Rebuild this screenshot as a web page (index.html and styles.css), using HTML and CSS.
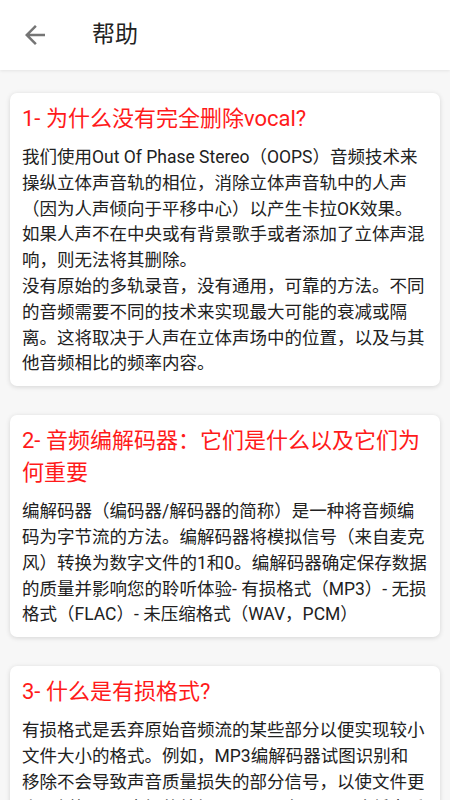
FILE: index.html
```html
<!DOCTYPE html>
<html lang="zh-CN">
<head>
<meta charset="utf-8">
<meta name="viewport" content="width=device-width, initial-scale=1">
<title>帮助</title>
<link rel="stylesheet" href="styles.css">
</head>
<body>
<header class="appbar">
  <span class="back" aria-label="返回">
    <svg viewBox="0 0 24 24" width="30" height="30"><path d="M20 11H7.83l5.59-5.59L12 4l-8 8 8 8 1.41-1.41L7.83 13H20v-2z" fill="#757575"/></svg>
  </span>
  <h1 class="title">帮助</h1>
</header>
<main class="list">
  <section class="card">
    <h2 class="q">1- 为什么没有完全删除vocal?</h2>
    <p class="a">我们使用Out Of Phase Stereo（OOPS）音频技术来操纵立体声音轨的相位，消除立体声音轨中的人声（因为人声倾向于平移中心）以产生卡拉OK效果。<br>如果人声不在中央或有背景歌手或者添加了立体声混响，则无法将其删除。<br>没有原始的多轨录音，没有通用，可靠的方法。不同的音频需要不同的技术来实现最大可能的衰减或隔离。这将取决于人声在立体声场中的位置，以及与其他音频相比的频率内容。</p>
  </section>
  <section class="card">
    <h2 class="q">2- 音频编解码器：它们是什么以及它们为何重要</h2>
    <p class="a">编解码器（编码器/解码器的简称）是一种将音频编码为字节流的方法。编解码器将模拟信号（来自麦克风）转换为数字文件的1和0。编解码器确定保存数据的质量并影响您的聆听体验- 有损格式（MP3）- 无损格式（FLAC）- 未压缩格式（WAV，PCM）</p>
  </section>
  <section class="card">
    <h2 class="q">3- 什么是有损格式?</h2>
    <p class="a">有损格式是丢弃原始音频流的某些部分以便实现较小文件大小的格式。例如，MP3编解码器试图识别和<br>移除不会导致声音质量损失的部分信号，以使文件更小。例如，一个好的编解码器可以在不明显降低音质的情况下删除大量的数据。</p>
  </section>
</main>
</body>
</html>
```
FILE: styles.css
```css
html, body {
  margin: 0;
  padding: 0;
}
body {
  background: #f7f7f7;
  font-family: Roboto, "Noto Sans CJK SC", sans-serif;
  color: #212121;
  width: 450px;
  overflow: hidden;
}
.appbar {
  height: 70px;
  background: #ffffff;
  display: flex;
  align-items: center;
  box-shadow: 0 1px 3px rgba(0, 0, 0, 0.08);
  position: relative;
  z-index: 1;
}
.back {
  width: 30px;
  height: 30px;
  margin-left: 20px;
  display: flex;
}
.title {
  margin: 0 0 0 42px;
  font-size: 23px;
  font-weight: 400;
  color: #222222;
  line-height: 30px;
}
.list {
  padding: 23px 10px;
  display: flex;
  flex-direction: column;
  gap: 29px;
}
.card {
  background: #ffffff;
  border-radius: 7px;
  box-shadow: 0 1px 5px rgba(0, 0, 0, 0.14);
  padding: 10px 12px 9px;
}
.q {
  margin: 0 0 10px;
  font-size: 22px;
  font-weight: 400;
  line-height: 32px;
  color: #ff1a1a;
}
.a {
  margin: 0;
  font-size: 17.5px;
  line-height: 25.8px;
  color: #212121;
}
```
